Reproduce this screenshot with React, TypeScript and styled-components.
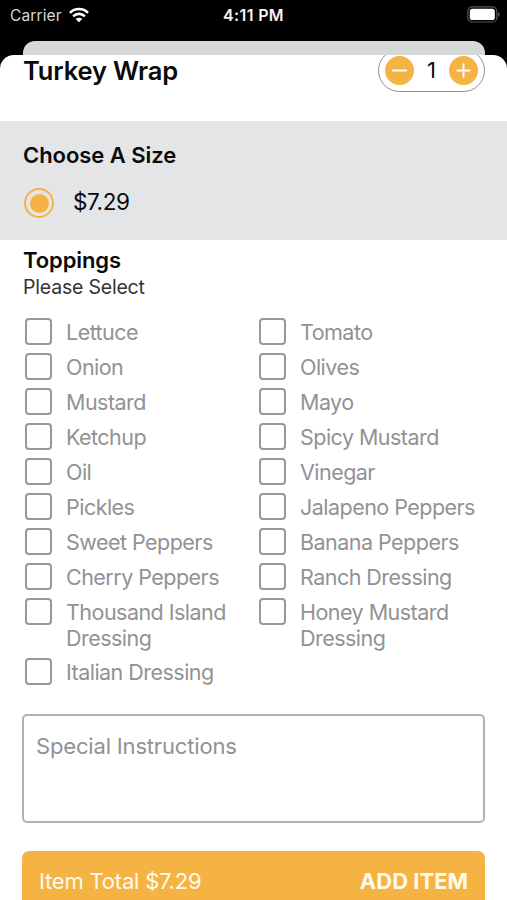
import React, { useState } from "react";
import styled, { createGlobalStyle } from "styled-components";

const ORANGE = "#f5b343";
const GREY = "#929294";

const GlobalStyle = createGlobalStyle`
  * { box-sizing: border-box; }
  html, body { margin: 0; background: #000; }
  body { font-family: Inter, "Liberation Sans", sans-serif; color: #0a0a0a; }
  button { font: inherit; border: 0; padding: 0; cursor: pointer; }
`;

const Screen = styled.div`
  display: flex;
  flex-direction: column;
  width: 507px;
  height: 900px;
  overflow: hidden;
  background: #000;
`;

const StatusBar = styled.header`
  display: grid;
  grid-template-columns: 1fr auto 1fr;
  align-items: center;
  flex: none;
  height: 41px;
  padding: 0 7px 12px 10px;
  color: #f4f4f4;
`;

const Carrier = styled.div`
  display: flex;
  align-items: center;
  gap: 7px;
  padding-top: 1px;
  font-size: 15.5px;
  letter-spacing: 0.12px;
  color: #d8d8d8;
`;

const Clock = styled.div`
  margin-right: 3px;
  font-size: 16px;
  font-weight: 600;
  letter-spacing: 0.35px;
`;

const BatteryIcon = styled.svg`
  justify-self: end;
`;

const PreviousCard = styled.div`
  flex: none;
  height: 14px;
  margin: 0 22px 0 23px;
  border-radius: 12px 12px 0 0;
  background: #d8d8d8;
`;

const Sheet = styled.main`
  flex: 1;
  min-height: 0;
  overflow: hidden;
  border-radius: 14px 14px 0 0;
  background: #fff;
`;

const TitleRow = styled.div`
  display: flex;
  justify-content: space-between;
  height: 66px;
  padding: 0 22px 0 23px;
`;

const Title = styled.h1`
  margin: 0;
  font-size: 25.5px;
  line-height: 31px;
  font-weight: 600;
  letter-spacing: -0.15px;
`;

const Stepper = styled.div`
  display: flex;
  align-items: center;
  justify-content: space-between;
  width: 107px;
  height: 43px;
  margin-top: -6px;
  padding: 0 6px;
  border: 1.5px solid #8e8e8e;
  border-radius: 22px;
`;

const StepButton = styled.button`
  display: flex;
  width: 29px;
  height: 29px;
  margin-bottom: 1px;
  border-radius: 50%;
  background: ${ORANGE};
`;

const Quantity = styled.span`
  margin-bottom: 1px;
  font-size: 22px;
  line-height: 28px;
`;

const SizeSection = styled.section`
  height: 119px;
  padding: 20px 23px 0;
  background: #e4e5e7;
`;

const SectionTitle = styled.h2<{ $spacing: number }>`
  margin: 0;
  font-size: 22px;
  line-height: 28px;
  font-weight: 600;
  letter-spacing: ${(p) => p.$spacing}px;
`;

const SizeOption = styled.label`
  display: flex;
  align-items: flex-start;
  gap: 19px;
  margin-top: 18px;
  padding-left: 1px;
  font-size: 22.5px;
  line-height: 30px;
  letter-spacing: -0.4px;
`;

const Radio = styled.span`
  display: flex;
  align-items: center;
  justify-content: center;
  width: 30px;
  height: 30px;
  margin-top: 1px;
  border: 2px solid ${ORANGE};
  border-radius: 50%;

  &::after {
    content: "";
    width: 19px;
    height: 19px;
    border-radius: 50%;
    background: ${ORANGE};
  }
`;

const Toppings = styled.section`
  padding: 6px 23px 0;
`;

const Hint = styled.p`
  margin: 0;
  font-size: 19.5px;
  line-height: 26px;
  letter-spacing: -0.2px;
  color: #333;
`;

const ToppingGrid = styled.div`
  display: grid;
  grid-template-columns: 234px 1fr;
  row-gap: 8px;
  margin: 18px 0 0 2px;
`;

const Topping = styled.div`
  display: flex;
  align-items: flex-start;
  gap: 14px;
  min-height: 27px;
  font-size: 21.5px;
  line-height: 26px;
  color: ${GREY};
`;

const Box = styled.button`
  flex: none;
  width: 27px;
  height: 27px;
  border: 2px solid #989898;
  border-radius: 4px;
  background: transparent;
`;

const ToppingName = styled.span`
  padding-top: 1px;
  margin-bottom: -1px;
  letter-spacing: -0.53px;
`;

const Instructions = styled.textarea`
  display: block;
  width: 463px;
  height: 109px;
  margin: 29px 0 0 22px;
  padding: 16px 12px;
  border: 2px solid #b2b2b2;
  border-radius: 5px;
  outline: 0;
  resize: none;
  font: 22px/28px Inter, "Liberation Sans", sans-serif;
  letter-spacing: -0.17px;

  &::placeholder {
    color: ${GREY};
    opacity: 1;
  }
`;

const AddBar = styled.button`
  display: flex;
  justify-content: space-between;
  width: 463px;
  height: 60px;
  margin: 28px 0 0 22px;
  padding: 16px 17px 0;
  border-radius: 7px;
  background: ${ORANGE};
  color: #fffaf0;
  font-size: 22px;
  line-height: 28px;
`;

const Total = styled.span`
  letter-spacing: -0.2px;
`;

const AddLabel = styled.span`
  font-weight: 700;
  letter-spacing: 0;
`;

const TOPPINGS = [
  "Lettuce", "Tomato",
  "Onion", "Olives",
  "Mustard", "Mayo",
  "Ketchup", "Spicy Mustard",
  "Oil", "Vinegar",
  "Pickles", "Jalapeno Peppers",
  "Sweet Peppers", "Banana Peppers",
  "Cherry Peppers", "Ranch Dressing",
  "Thousand Island Dressing", "Honey Mustard Dressing",
  "Italian Dressing",
];

function Wifi() {
  return (
    <svg width="20" height="16" viewBox="0 0 21 16" fill="none" stroke="#fff" strokeWidth="2.7">
      <path d="M1 5.7C6.2 0.4 14.8 0.4 20 5.7" />
      <path d="M4.3 9.4C7.8 6 13.2 6 16.7 9.4" />
      <path d="M10.5 15.6L7 12.2C9 10.5 12 10.5 14 12.2Z" fill="#fff" stroke="none" />
    </svg>
  );
}

function Battery() {
  return (
    <BatteryIcon width="33" height="17" viewBox="0 0 33 17">
      <rect x="0.8" y="0.8" width="29" height="15.2" rx="4.5" fill="none" stroke="#555" strokeWidth="1.2" />
      <rect x="2.8" y="2.8" width="25" height="11.2" rx="2.6" fill="#fff" />
      <path d="M31.2 6v5q1.4-.8 1.4-2.5t-1.4-2.5Z" fill="#666" />
    </BatteryIcon>
  );
}

function StepIcon({ plus = false }: { plus?: boolean }) {
  return (
    <svg width="29" height="29" viewBox="0 0 29 29" stroke="#fffaf0" strokeWidth="2" strokeLinecap="round">
      <path d={plus ? "M8.3 14.5h12.4M14.5 8.3v12.4" : "M7.8 14.5h13.4"} />
    </svg>
  );
}

export default function App() {
  const [quantity, setQuantity] = useState(1);

  return (
    <>
      <GlobalStyle />
      <Screen>
        <StatusBar>
          <Carrier>
            Carrier
            <Wifi />
          </Carrier>
          <Clock>4:11 PM</Clock>
          <Battery />
        </StatusBar>
        <PreviousCard />
        <Sheet>
          <TitleRow>
            <Title>Turkey Wrap</Title>
            <Stepper>
              <StepButton aria-label="Decrease" onClick={() => setQuantity(Math.max(1, quantity - 1))}>
                <StepIcon />
              </StepButton>
              <Quantity>{quantity}</Quantity>
              <StepButton aria-label="Increase" onClick={() => setQuantity(quantity + 1)}>
                <StepIcon plus />
              </StepButton>
            </Stepper>
          </TitleRow>
          <SizeSection>
            <SectionTitle $spacing={-0.05}>Choose A Size</SectionTitle>
            <SizeOption>
              <Radio />
              $7.29
            </SizeOption>
          </SizeSection>
          <Toppings>
            <SectionTitle $spacing={-0.1}>Toppings</SectionTitle>
            <Hint>Please Select</Hint>
            <ToppingGrid>
              {TOPPINGS.map((name) => (
                <Topping key={name}>
                  <Box aria-label={name} />
                  <ToppingName>{name}</ToppingName>
                </Topping>
              ))}
            </ToppingGrid>
          </Toppings>
          <Instructions placeholder="Special Instructions" />
          <AddBar>
            <Total>Item Total $7.29</Total>
            <AddLabel>ADD ITEM</AddLabel>
          </AddBar>
        </Sheet>
      </Screen>
    </>
  );
}
